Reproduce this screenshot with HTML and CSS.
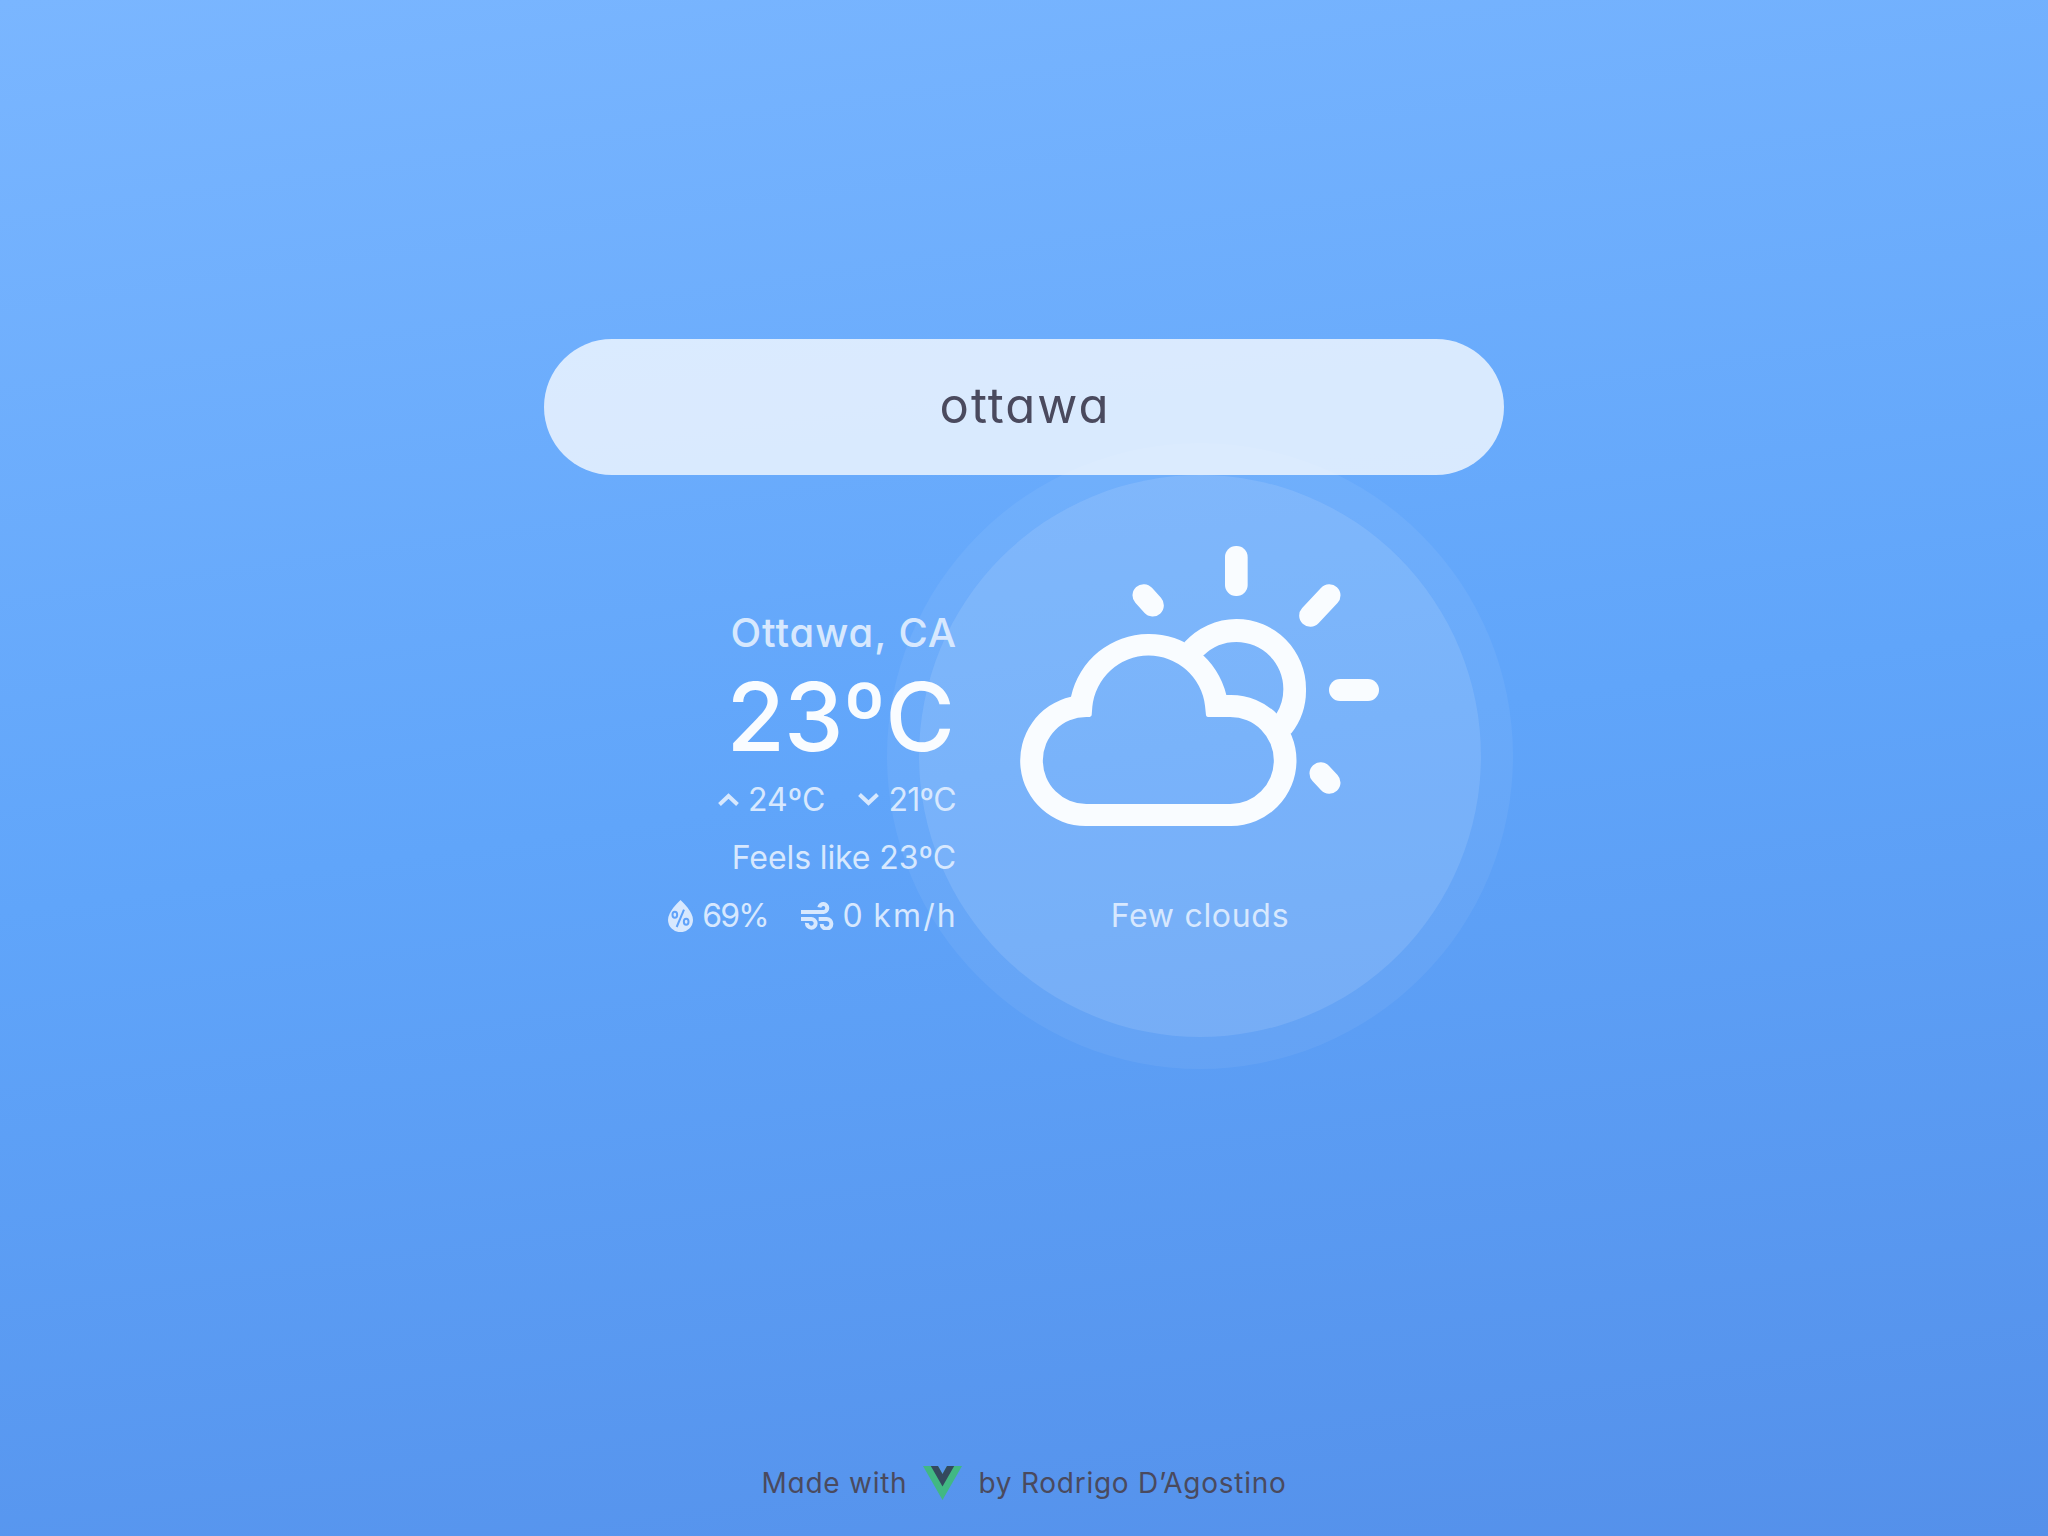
FILE: index.html
```
<!DOCTYPE html>
<html lang="en">
<head>
<meta charset="utf-8">
<title>Weather</title>
<link rel="stylesheet" href="styles.css">
</head>
<body>
<form class="search"><input class="search-input" type="text" value="ottawa" aria-label="City"></form>
<main class="weather">
  <section class="info">
    <h1 class="place">Ottawa, CA</h1>
    <div class="temp">23ºC</div>
    <div class="row">
      <span class="stat"><svg class="chevron" viewBox="0 0 21 13"><path d="M1.500 11.500 10.500 3 19.500 11.500"/></svg><span class="t-max">24ºC</span></span>
      <span class="stat"><svg class="chevron" viewBox="0 0 21 13"><path d="M1.500 1.500 10.500 10 19.500 1.500"/></svg><span class="t-min">21ºC</span></span>
    </div>
    <div class="row row-feels"><span class="feels">Feels like 23ºC</span></div>
    <div class="row">
      <span class="stat"><svg class="drop" viewBox="27 33 75 96"><path class="fill" d="M64.500 33C72 40 102 69 102 92A37.500 37.500 0 0 1 27 92C27 69 57 40 64.500 33Z"/><g class="percent"><ellipse cx="47.500" cy="77" rx="7" ry="9"/><ellipse cx="81.500" cy="98" rx="7" ry="9"/><path d="M75 62 53 114"/></g></svg><span class="humidity">69%</span></span>
      <span class="stat"><svg class="wind" viewBox="30 36 98 84"><path d="M30 66H98A12 12 0 1 0 85 52M30 87H60A13 13 0 1 1 48 99M83 87H107A14.500 14.500 0 1 1 92 102"/></svg><span class="speed">0 km/h</span></span>
    </div>
  </section>
  <section class="sky">
    <svg class="sky-icon" viewBox="60 78 1077 840">
      <path d="M553 367A211 211 0 0 1 709 297A209 209 0 0 1 918 507A209 209 0 0 1 874 640L850 650L825 590L830 580A141 141 0 0 0 850 507A141 141 0 0 0 709 366A141 141 0 0 0 611 406L590 410Z"/>
      <path fill-rule="evenodd" d="M693 918H257A196.500 196.500 0 0 1 213 530A239 239 0 0 1 679 525H693A196.500 196.500 0 0 1 693 918ZM691 852A130.500 130.500 0 0 0 691 591H624Q619 591 618 586L615 557A170 170 0 0 0 277 560L275 586Q274 590 269 591H259A130.500 130.500 0 0 0 259 852Z"/>
      <rect x="675" y="78" width="68" height="150" rx="33"/>
      <rect x="987" y="477" width="150" height="66" rx="33"/>
      <path class="ray" d="M988 226 931 287M431 226 458 256M962 760 988 788"/>
    </svg>
    <p class="sky-text">Few clouds</p>
  </section>
</main>
<footer class="footer">
  <span class="made">Made with</span>
  <svg class="vue" viewBox="0 0 261.760 226.690"><path fill="#41b883" d="M161.096 0 130.880 52.340 100.670 0H0L130.880 226.690 261.760 0Z"/><path fill="#34495e" d="M161.096 0 130.880 52.340 100.670 0H52.350L130.880 136.010 209.400 0Z"/></svg>
  <span class="author">by Rodrigo D’Agostino</span>
</footer>
</body>
</html>
```
FILE: styles.css
```
* { box-sizing: border-box; margin: 0; padding: 0; }

body {
  display: flex;
  flex-direction: column;
  align-items: center;
  height: 100vh;
  overflow: hidden;
  padding-top: 339px;
  background: linear-gradient(172deg, #7ab6ff 0%, #60a5fa 50%, #5490ea 100%);
  color: #d7e8fe;
  font-family: Inter, "Open Sans", sans-serif;
  font-feature-settings: "cv11";
}

.search { position: relative; z-index: 1; width: 960px; height: 136px; }
.search-input {
  width: 100%;
  height: 100%;
  padding-bottom: 3px;
  padding-left: 2px;
  border: 0;
  border-radius: 68px;
  outline: 0;
  background: rgba(255, 255, 255, .75);
  color: #4a4a5e;
  font: 400 49px Inter, "Open Sans", sans-serif;
  font-feature-settings: "cv11";
  letter-spacing: 2px;
  text-align: center;
}

.weather { display: flex; align-items: flex-start; width: 960px; }

.info {
  position: relative;
  z-index: 1;
  display: flex;
  flex-direction: column;
  align-items: flex-end;
  width: 412px;
  padding-top: 124.5px;
}
.place { height: 65px; margin-right: -1px; font-size: 40px; font-weight: 500; line-height: 65px; letter-spacing: .9px; }
.temp { height: 106px; margin-right: 2px; color: #f9fcff; font-size: 95px; font-weight: 500; line-height: 103px; letter-spacing: -1px; }
.row { display: flex; gap: 33px; height: 58.5px; font-size: 32px; line-height: 58.5px; white-space: nowrap; }
.row-feels { height: 57.5px; }
.stat { display: flex; align-items: center; gap: 9px; }
.t-max { letter-spacing: 0; }
.t-min { letter-spacing: -.7px; }
.feels { letter-spacing: -.1px; }
.humidity { letter-spacing: -1.8px; }
.speed { letter-spacing: 2.2px; word-spacing: -3px; margin-right: -2px; }

.chevron { width: 21px; height: 13px; fill: none; stroke: currentColor; stroke-width: 4; }
.drop { width: 25px; height: 32px; }
.fill { fill: currentColor; }
.percent { fill: none; stroke: #5fa2fa; stroke-width: 6; }
.wind { width: 32.7px; height: 28px; fill: none; stroke: currentColor; stroke-width: 12; }

.sky {
  display: flex;
  flex-direction: column;
  align-items: center;
  flex: none;
  width: 562px;
  height: 562px;
  margin-left: -37px;
  padding-top: 71px;
  border-radius: 50%;
  background: rgba(255, 255, 255, .16);
  box-shadow: 0 0 0 32px rgba(255, 255, 255, .06);
}
.sky-icon { width: 359px; height: 280px; margin-right: 1px; fill: #f9fcff; }
.ray { stroke: #f9fcff; stroke-width: 67; stroke-linecap: round; }
.sky-text { margin-top: 60px; font-size: 32px; line-height: 60px; letter-spacing: .7px; }

.footer {
  display: flex;
  align-items: center;
  justify-content: center;
  height: 48px;
  margin-top: auto;
  margin-bottom: 29px;
  color: #4a4a5e;
  font-size: 28px;
  letter-spacing: .75px;
}
.vue { width: 39px; height: 34px; margin: 0 16px; }
```
